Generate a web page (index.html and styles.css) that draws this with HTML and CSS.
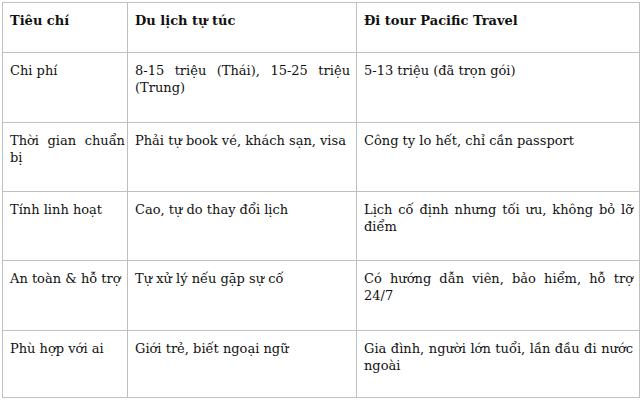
FILE: index.html
```html
<!DOCTYPE html>
<html lang="vi">
<head>
<meta charset="utf-8">
<title>So sánh</title>
<link rel="stylesheet" href="styles.css">
</head>
<body>
<table class="compare">
  <colgroup>
    <col class="c1">
    <col class="c2">
    <col class="c3">
  </colgroup>
  <thead>
    <tr class="head">
      <th>Tiêu chí</th>
      <th>Du lịch tự túc</th>
      <th>Đi tour Pacific Travel</th>
    </tr>
  </thead>
  <tbody>
    <tr class="r70">
      <td>Chi phí</td>
      <td>8-15 triệu (Thái), 15-25 triệu (Trung)</td>
      <td>5-13 triệu (đã trọn gói)</td>
    </tr>
    <tr class="r69">
      <td>Thời gian chuẩn bị</td>
      <td>Phải tự book vé, khách sạn, visa</td>
      <td>Công ty lo hết, chỉ cần passport</td>
    </tr>
    <tr class="r69">
      <td>Tính linh hoạt</td>
      <td>Cao, tự do thay đổi lịch</td>
      <td>Lịch cố định nhưng tối ưu, không bỏ lỡ điểm</td>
    </tr>
    <tr class="r70">
      <td>An toàn &amp; hỗ trợ</td>
      <td>Tự xử lý nếu gặp sự cố</td>
      <td>Có hướng dẫn viên, bảo hiểm, hỗ trợ 24/7</td>
    </tr>
    <tr class="r67">
      <td>Phù hợp với ai</td>
      <td>Giới trẻ, biết ngoại ngữ</td>
      <td>Gia đình, người lớn tuổi, lần đầu đi nước ngoài</td>
    </tr>
  </tbody>
</table>
</body>
</html>
```

FILE: styles.css
```css
html, body {
  margin: 0;
  padding: 0;
  background: #ffffff;
}

body {
  padding: 2px 0 0 2px;
  font-family: "DejaVu Serif", "Liberation Serif", serif;
  font-size: 13px;
  color: #111111;
}

.compare {
  border-collapse: collapse;
  table-layout: fixed;
  width: 637px;
}

.c1 { width: 125px; }
.c2 { width: 229px; }
.c3 { width: 283px; }

.compare th,
.compare td {
  border: 1px solid #bfbfbf;
  padding: 9px 6px 0 7px;
  vertical-align: top;
  text-align: justify;
  line-height: 17px;
  box-sizing: border-box;
}

.compare th:first-child,
.compare td:first-child {
  padding-right: 2px;
}

.compare th {
  font-weight: bold;
  text-align: left;
}

.head { height: 50px; }
.r70 { height: 70px; }
.r69 { height: 69px; }
.r67 { height: 67px; }
```
